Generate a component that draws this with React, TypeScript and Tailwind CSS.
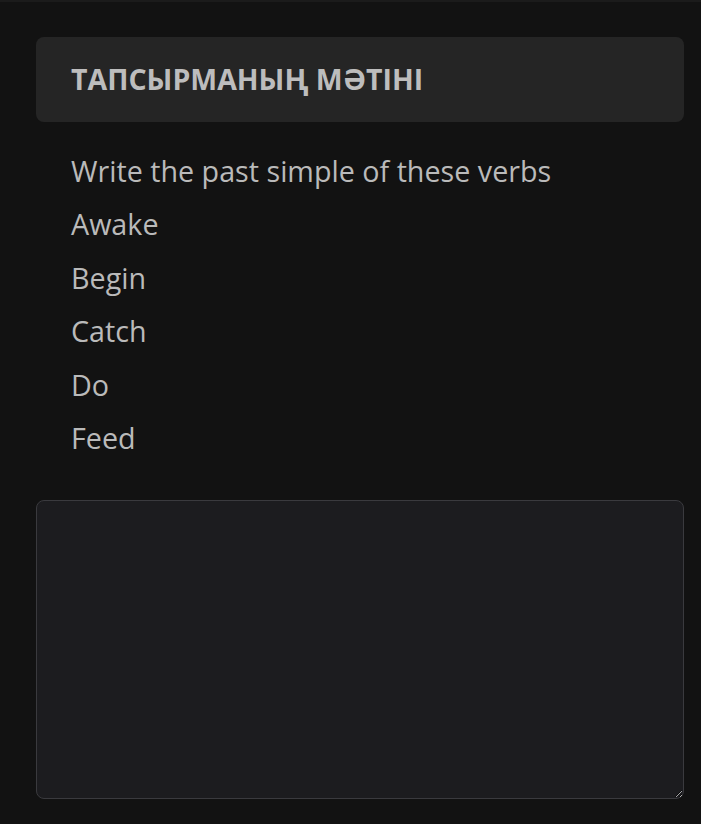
import React from 'react';

const lines = ['Write the past simple of these verbs', 'Awake', 'Begin', 'Catch', 'Do', 'Feed'];

export default function App() {
  return (
    <div
      className="min-h-[824px] w-full bg-[#121212] border-t-2 border-[#1b1b1b] pl-9 pr-[17px] pt-[35px] pb-6"
      style={{ fontFamily: '"Open Sans", "Noto Sans", sans-serif' }}
    >
      <div className="h-[85px] rounded-lg bg-[#252525] flex items-center px-[35px]">
        <h2 className="text-[28.5px] font-bold text-[#bdbdbd] uppercase">Тапсырманың мәтіні</h2>
      </div>

      <div className="px-[35px] pt-[22px] flex flex-col">
        {lines.map((t) => (
          <p key={t} className="text-[28.7px] leading-[53.4px] text-[#bababa]">
            {t}
          </p>
        ))}
      </div>

      <textarea className="mt-[36px] block w-full h-[299px] rounded-lg bg-[#1c1c1f] border border-[#3a3a3e] text-[#bdbdbd] outline-none" />
    </div>
  );
}
